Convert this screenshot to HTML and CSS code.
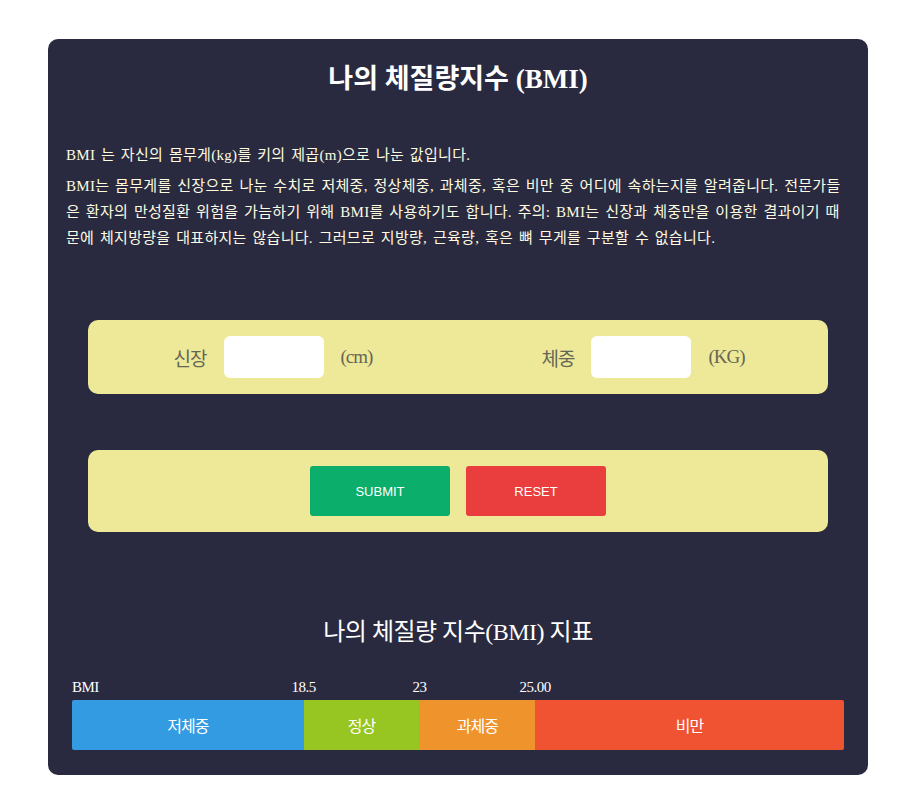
FILE: index.html
```html
<!DOCTYPE html>
<html lang="ko">
<head>
<meta charset="utf-8">
<title>BMI</title>
<link rel="stylesheet" href="styles.css">
</head>
<body>
<main class="card">
  <h1 class="title">나의 체질량지수 (BMI)</h1>
  <p class="desc first">BMI 는 자신의 몸무게(kg)를 키의 제곱(m)으로 나눈 값입니다.</p>
  <p class="desc">BMI는 몸무게를 신장으로 나눈 수치로 저체중, 정상체중, 과체중, 혹은 비만 중 어디에 속하는지를 알려줍니다. 전문가들은 환자의 만성질환 위험을 가늠하기 위해 BMI를 사용하기도 합니다. 주의: BMI는 신장과 체중만을 이용한 결과이기 때문에 체지방량을 대표하지는 않습니다. 그러므로 지방량, 근육량, 혹은 뼈 무게를 구분할 수 없습니다.</p>

  <form class="panel inputs">
    <div class="field">
      <label class="label" for="h">신장</label>
      <input class="box" id="h" type="text">
      <span class="unit">(cm)</span>
    </div>
    <div class="field">
      <label class="label" for="w">체중</label>
      <input class="box" id="w" type="text">
      <span class="unit">(KG)</span>
    </div>
  </form>

  <div class="panel actions">
    <button class="btn submit" type="button">SUBMIT</button>
    <button class="btn reset" type="button">RESET</button>
  </div>

  <h2 class="chart-title">나의 체질량 지수(BMI) 지표</h2>
  <div class="scale">
    <div class="tick s30"><span class="start">BMI</span><span class="end">18.5</span></div>
    <div class="tick s15"><span class="end">23</span></div>
    <div class="tick s15"><span class="end">25.00</span></div>
    <div class="tick s40"></div>
  </div>
  <div class="bar">
    <div class="seg s30 blue">저체중</div>
    <div class="seg s15 green">정상</div>
    <div class="seg s15 orange">과체중</div>
    <div class="seg s40 red">비만</div>
  </div>
</main>
</body>
</html>
```

FILE: styles.css
```css
* { box-sizing: border-box; }
body {
  margin: 0;
  background: #ffffff;
  font-family: "Liberation Serif", "Noto Sans CJK KR", serif;
}
.card {
  width: 820px;
  margin: 39px 0 0 48px;
  padding: 24px 18px 25px;
  background: #292a40;
  border-radius: 10px;
  color: #ffffff;
}
.title {
  margin: 0;
  font-size: 27px;
  line-height: 32px;
  font-weight: bold;
  text-align: center;
  letter-spacing: 0;
}
.desc {
  margin: 0;
  color: #fffbe0;
  font-size: 15px;
  line-height: 26px;
  letter-spacing: 0.3px;
  word-spacing: 1.7px;
}
.desc.first { margin-top: 47px; margin-bottom: 5px; }
.panel {
  margin: 0 22px;
  background: #eee999;
  border-radius: 10px;
}
.inputs {
  margin-top: 69px;
  height: 74px;
  display: grid;
  grid-template-columns: 1fr 1fr;
  align-items: center;
}
.field {
  display: flex;
  align-items: center;
  justify-content: center;
  gap: 17px;
}
.label, .unit {
  color: #666655;
  font-size: 19px;
  letter-spacing: -1px;
}
.box {
  width: 100px;
  height: 42px;
  border: none;
  border-radius: 6px;
  background: #ffffff;
  outline: none;
}
.actions {
  margin-top: 56px;
  height: 82px;
  display: flex;
  justify-content: center;
  align-items: center;
  gap: 16px;
}
.btn {
  width: 140px;
  height: 50px;
  border: none;
  border-radius: 3px;
  color: #ffffff;
  font-family: "Liberation Sans", Arial, sans-serif;
  font-size: 13px;
}
.submit { background: #0bae6b; }
.reset { background: #e93d3e; }
.chart-title {
  margin: 86px 0 0;
  font-size: 24px;
  line-height: 28px;
  font-weight: normal;
  text-align: center;
  letter-spacing: -0.5px;
}
.scale, .bar {
  display: flex;
  margin: 0 6px;
}
.scale {
  margin-top: 28px;
  height: 26px;
  font-size: 15px;
  line-height: 26px;
  letter-spacing: -0.5px;
}
.tick {
  display: flex;
  justify-content: space-between;
}
.tick .end { transform: translateX(50%); margin-left: auto; }
.s30 { width: 30%; }
.s15 { width: 15%; }
.s40 { width: 40%; }
.bar {
  height: 50px;
  border-radius: 2px;
  overflow: hidden;
}
.seg {
  display: flex;
  align-items: center;
  justify-content: center;
  font-size: 16px;
  color: #ffffff;
  letter-spacing: -1px;
}
.blue { background: #339be2; }
.green { background: #97c521; }
.orange { background: #ef942c; }
.red { background: #f05332; }
```
